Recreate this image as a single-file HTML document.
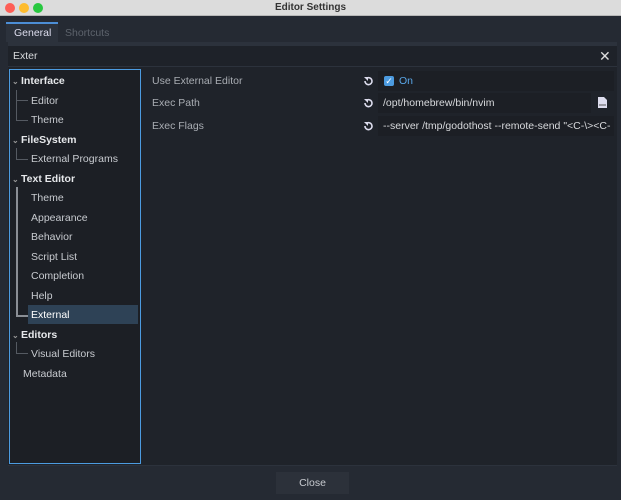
<!DOCTYPE html><html><head><style>
*{margin:0;padding:0;box-sizing:border-box}
body{width:621px;height:500px;background:#252a33;font-family:"Liberation Sans",sans-serif;font-size:10.5px;color:#c8cbd0;position:relative;overflow:hidden}
.a{position:absolute}
.tb{left:0;top:0;width:621px;height:16px;background:#dcdcdc;border-bottom:1px solid #b8b8b8;text-align:center;color:#333;font-weight:bold;font-size:10px;line-height:15px}
.dot{top:3px;width:10px;height:10px;border-radius:50%}
.row{left:0;height:19px;line-height:19px;white-space:nowrap}
.h{font-weight:bold;color:#e6e8eb}
.ln{background:#555a62}
.cv{font-size:8px;color:#999;display:inline-block;width:9px}
</style></head><body>
<div class="a tb">Editor Settings</div>
<div class="a dot" style="left:5px;background:#fe5f57"></div>
<div class="a dot" style="left:19px;background:#febc2e"></div>
<div class="a dot" style="left:33px;background:#28c840"></div>
<div class="a" style="left:6px;top:22px;width:52px;height:20px;background:#2c323c;border-top:2px solid #4c8ed6;color:#dde;line-height:18px;padding-left:8px;font-size:10.5px">General</div>
<div class="a" style="left:65px;top:24px;color:#5d636c;line-height:18px">Shortcuts</div>
<div class="a" style="left:8px;top:42px;width:609px;height:424px;background:#2c323c"></div>
<div class="a" style="left:8px;top:46px;width:609px;height:20px;background:#1e2229;line-height:20px;padding-left:5px;color:#d8dadd">Exter</div>
<div class="a" style="left:599px;top:46px;color:#ddd;font-size:14px;line-height:20px">✕</div>
<div class="a" style="left:8px;top:67px;width:609px;height:398px;background:#1f232a"></div>
<div class="a" style="left:9px;top:69px;width:132px;height:395px;background:#1c1f25;border:1px solid #4c9be0"></div>
<div class="a" style="left:28px;top:305px;width:110px;height:19px;background:#2e4256"></div>
<div class="a ln" style="left:16px;top:90px;width:1px;height:30px"></div>
<div class="a ln" style="left:16px;top:100px;width:12px;height:1px"></div>
<div class="a ln" style="left:16px;top:120px;width:12px;height:1px"></div>
<div class="a ln" style="left:16px;top:148px;width:1px;height:11px"></div>
<div class="a ln" style="left:16px;top:159px;width:12px;height:1px"></div>
<div class="a ln" style="left:16px;top:187px;width:2px;height:128px;background:#8a8e95"></div>
<div class="a ln" style="left:16px;top:315px;width:12px;height:2px;background:#8a8e95"></div>
<div class="a ln" style="left:16px;top:342px;width:1px;height:11px"></div>
<div class="a ln" style="left:16px;top:353px;width:12px;height:1px"></div>
<div class="a" style="left:12px;top:72px;width:128px">
<div class="a row h" style="top:0"><span class="cv">⌄</span>Interface</div>
<div class="a row" style="top:19.5px;left:19px">Editor</div>
<div class="a row" style="top:39px;left:19px">Theme</div>
<div class="a row h" style="top:58.5px"><span class="cv">⌄</span>FileSystem</div>
<div class="a row" style="top:78px;left:19px">External Programs</div>
<div class="a row h" style="top:97.5px"><span class="cv">⌄</span>Text Editor</div>
<div class="a row" style="top:117px;left:19px">Theme</div>
<div class="a row" style="top:136.5px;left:19px">Appearance</div>
<div class="a row" style="top:156px;left:19px">Behavior</div>
<div class="a row" style="top:175.5px;left:19px">Script List</div>
<div class="a row" style="top:195px;left:19px">Completion</div>
<div class="a row" style="top:214.5px;left:19px">Help</div>
<div class="a row" style="top:234px;left:19px;color:#fff">External</div>
<div class="a row h" style="top:253.5px"><span class="cv">⌄</span>Editors</div>
<div class="a row" style="top:273px;left:19px">Visual Editors</div>
<div class="a row" style="top:292.5px;left:11px">Metadata</div>
</div>
<div class="a" style="left:152px;top:75px;color:#a9adb3">Use External Editor</div>
<div class="a" style="left:152px;top:97px;color:#a9adb3">Exec Path</div>
<div class="a" style="left:152px;top:120px;color:#a9adb3">Exec Flags</div>
<div class="a" style="left:378px;top:71px;width:236px;height:20px;background:#1c1f25"></div>
<div class="a" style="left:378px;top:93px;width:213px;height:20px;background:#1c1f25;line-height:20px;padding-left:5px;color:#d8dadd">/opt/homebrew/bin/nvim</div>
<div class="a" style="left:378px;top:116px;width:236px;height:20px;background:#1c1f25;line-height:20px;padding-left:5px;color:#d8dadd;overflow:hidden;white-space:nowrap">--server /tmp/godothost --remote-send "&lt;C-\&gt;&lt;C-</div>
<div class="a" style="left:384px;top:76px;width:10px;height:10px;background:#4c9be0;border-radius:2px;color:#fff;font-size:9px;line-height:10px;text-align:center">✓</div>
<div class="a" style="left:399px;top:75px;color:#5aa7e8">On</div>
<svg class="a" style="left:363px;top:76px" width="10" height="60" viewBox="0 0 10 60"><g fill="none" stroke="#dde" stroke-width="1.6"><path d="M2 5a3.5 3.5 0 1 0 3-3.3"/><path d="M2 27a3.5 3.5 0 1 0 3-3.3"/><path d="M2 50a3.5 3.5 0 1 0 3-3.3"/></g><g fill="#dde"><path d="M1 1h4v4z"/><path d="M1 23h4v4z"/><path d="M1 46h4v4z"/></g></svg>
<svg class="a" style="left:598px;top:97px" width="9" height="11" viewBox="0 0 9 11"><path d="M0 0h6l3 3v8H0z" fill="#dde"/><path d="M1 8h7" stroke="#555" stroke-width="1"/></svg>
<div class="a" style="left:276px;top:472px;width:73px;height:22px;background:#2c313a;line-height:22px;text-align:center;color:#c8cbd0">Close</div>
</body></html>
